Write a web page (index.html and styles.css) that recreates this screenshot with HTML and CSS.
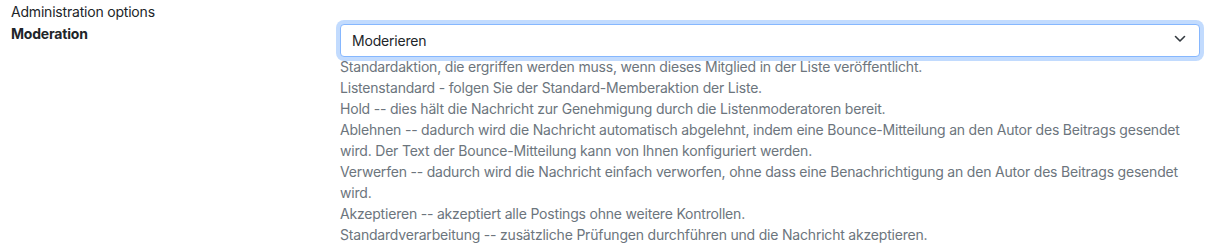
FILE: index.html
```html
<!DOCTYPE html>
<html lang="de">
<head>
<meta charset="utf-8">
<title>Moderation</title>
<link rel="stylesheet" href="styles.css">
</head>
<body>
<div class="page">
  <div class="section-title">Administration options</div>
  <div class="row">
    <label class="label" for="mod">Moderation</label>
    <div class="field">
      <div class="select-wrap">
        <select id="mod" class="select">
          <option>Moderieren</option>
        </select>
        <svg class="chevron" viewBox="0 0 12 12" width="12" height="12" aria-hidden="true"><path d="M1.5 3.5 6 8 10.5 3.5" fill="none" stroke="#343a40" stroke-width="1.6" stroke-linecap="round" stroke-linejoin="round"/></svg>
      </div>
      <div class="help">Standardaktion, die ergriffen werden muss, wenn dieses Mitglied in der Liste veröffentlicht.<br>Listenstandard - folgen Sie der Standard-Memberaktion der Liste.<br>Hold -- dies hält die Nachricht zur Genehmigung durch die Listenmoderatoren bereit.<br>Ablehnen -- dadurch wird die Nachricht automatisch abgelehnt, indem eine Bounce-Mitteilung an den Autor des Beitrags gesendet wird. Der Text der Bounce-Mitteilung kann von Ihnen konfiguriert werden.<br>Verwerfen -- dadurch wird die Nachricht einfach verworfen, ohne dass eine Benachrichtigung an den Autor des Beitrags gesendet wird.<br>Akzeptieren -- akzeptiert alle Postings ohne weitere Kontrollen.<br>Standardverarbeitung -- zusätzliche Prüfungen durchführen und die Nachricht akzeptieren.</div>
    </div>
  </div>
</div>
</body>
</html>
```
FILE: styles.css
```css
* { box-sizing: border-box; }
html, body { margin: 0; padding: 0; background: #fff; }
body {
  font-family: Inter, "Noto Sans", "Liberation Sans", sans-serif;
  font-size: 14px;
  line-height: 21px;
  color: #212529;
  letter-spacing: -0.2px;
}
.page { padding: 1px 11px 0 11px; }
.section-title { height: 21px; }
.row { display: flex; }
.label { width: 329px; font-weight: 700; padding-top: 1px; }
.field { width: 860px; padding-top: 2px; }
.select-wrap { position: relative; }
.select {
  display: block;
  width: 100%;
  height: 33px;
  padding: 0 36px 0 11px;
  font: inherit;
  letter-spacing: inherit;
  color: #212529;
  background: #fff;
  border: 1px solid #86b7fe;
  border-radius: 4px;
  box-shadow: 0 0 0 4px rgba(13,110,253,.25);
  appearance: none;
  -webkit-appearance: none;
  outline: none;
}
.chevron { position: absolute; right: 14px; top: 9px; width: 12px; height: 12px; pointer-events: none; }
.help { color: #6c757d; margin-top: -1px; }
```
